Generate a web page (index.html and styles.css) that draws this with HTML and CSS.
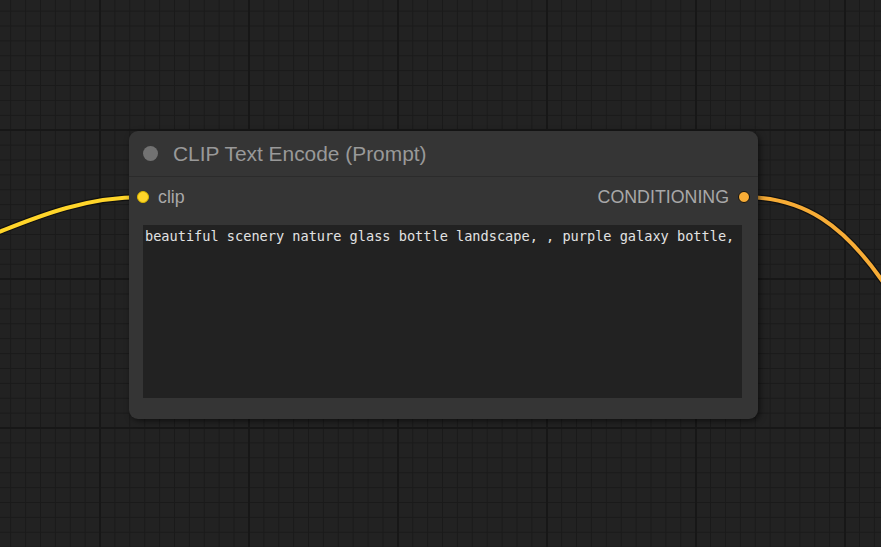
FILE: index.html
```html
<!DOCTYPE html>
<html lang="en">
<head>
<meta charset="utf-8">
<title>CLIP Text Encode (Prompt)</title>
<link rel="stylesheet" href="styles.css">
</head>
<body>
<div class="canvas">
  <svg class="links" width="881" height="547" viewBox="0 0 881 547">
    <path class="link-outline" d="M -10 235.5 C 30 220, 80 197, 143 197"/>
    <path class="link-clip" d="M -10 235.5 C 30 220, 80 197, 143 197"/>
    <path class="link-outline" d="M 744 197 C 800 197, 845 220, 895 300"/>
    <path class="link-cond" d="M 744 197 C 800 197, 845 220, 895 300"/>
  </svg>
  <div class="node">
    <div class="node-title">
      <span class="title-dot"></span>
      <span class="title-text">CLIP Text Encode (Prompt)</span>
    </div>
    <div class="node-slots">
      <div class="slot slot-in">
        <span class="slot-dot dot-clip"></span>
        <span class="slot-label">clip</span>
      </div>
      <div class="slot slot-out">
        <span class="slot-label">CONDITIONING</span>
        <span class="slot-dot dot-cond"></span>
      </div>
    </div>
    <textarea class="prompt" spellcheck="false">beautiful scenery nature glass bottle landscape, , purple galaxy bottle,</textarea>
  </div>
</div>
</body>
</html>
```

FILE: styles.css
```css
html, body {
  margin: 0;
  padding: 0;
  background: #222222;
  overflow: hidden;
}

.canvas {
  position: relative;
  width: 881px;
  height: 547px;
  overflow: hidden;
  background-color: #222222;
  background-image:
    linear-gradient(to right, #171717 0, #171717 2px, transparent 2px),
    linear-gradient(to bottom, #171717 0, #171717 2px, transparent 2px),
    linear-gradient(to right, #1a1a1a 0, #1a1a1a 1px, transparent 1px),
    linear-gradient(to bottom, #1a1a1a 0, #1a1a1a 1px, transparent 1px);
  background-size: 149px 149px, 149px 149px, 14.9px 14.9px, 14.9px 14.9px;
  background-position: 99px 0, 0 129px, 10.2px 0, 0 10.6px;
  font-family: "Liberation Sans", Arial, sans-serif;
}

.links {
  position: absolute;
  left: 0;
  top: 0;
  pointer-events: none;
}

.links path {
  fill: none;
  stroke-linecap: round;
}

.link-outline {
  stroke: #111111;
  stroke-width: 6.5;
}

.link-clip {
  stroke: #ffd52a;
  stroke-width: 4;
}

.link-cond {
  stroke: #f7ac36;
  stroke-width: 4;
}

.node {
  position: absolute;
  left: 129px;
  top: 131px;
  width: 629px;
  height: 288px;
  background: #353535;
  border-radius: 9px;
  box-shadow: 2px 2px 6px rgba(0, 0, 0, 0.55);
  display: flex;
  flex-direction: column;
}

.node-title {
  height: 45px;
  border-bottom: 1px solid #2b2b2b;
  display: flex;
  align-items: center;
  padding-left: 14px;
  gap: 15px;
}

.title-dot {
  width: 15px;
  height: 15px;
  border-radius: 50%;
  background: #727272;
  flex: none;
}

.title-text {
  color: #999999;
  font-size: 20.9px;
  white-space: nowrap;
}

.node-slots {
  height: 40px;
  display: flex;
  justify-content: space-between;
  align-items: center;
  padding: 0 8px;
}

.slot {
  display: flex;
  align-items: center;
  gap: 9px;
}

.slot-label {
  color: #a8a8a8;
  font-size: 17.8px;
}

.slot-dot {
  width: 12px;
  height: 12px;
  border-radius: 50%;
  box-sizing: border-box;
  flex: none;
}

.dot-clip {
  background: #ffd52a;
  border: 1px solid #d9b600;
}

.dot-cond {
  background: #f7ac36;
  border: 1px solid #111111;
}

.prompt {
  margin: 8px 0 0 14px;
  width: 599px;
  height: 173px;
  box-sizing: border-box;
  background: #222222;
  border: none;
  outline: none;
  resize: none;
  overflow: hidden;
  color: #e2e2e2;
  font-family: "DejaVu Sans Mono", "Liberation Mono", monospace;
  font-size: 13.6px;
  line-height: 1.2;
  padding: 3px 2px;
}
```
